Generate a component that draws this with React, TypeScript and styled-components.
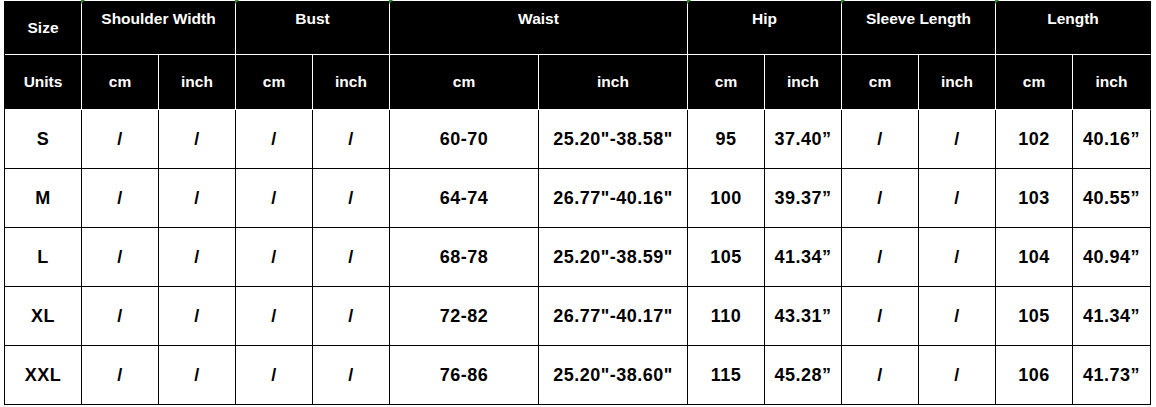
import React from "react";
import styled, { createGlobalStyle, css } from "styled-components";

const Global = createGlobalStyle`
  html, body { margin: 0; padding: 0; background: #fff; }
  body { font-family: "Liberation Sans", Arial, sans-serif; }
`;

const Page = styled.div`
  padding: 1px 0 0 4px;
`;

const Grid = styled.div`
  display: grid;
  grid-template-columns: 77px 77px 77px 77px 77px 149px 149px 77px 77px 77px 77px 77px 78px;
  grid-template-rows: 54px 55px repeat(5, 59px);
  width: max-content;
  border-left: 1px solid #000;
`;

const HeadCell = styled.div<{ $span?: number; $top?: boolean; $mark?: boolean }>`
  position: relative;
  box-sizing: border-box;
  grid-column: span ${(p) => p.$span ?? 1};
  background: #000;
  color: #fff;
  font-weight: bold;
  font-size: 15.5px;
  line-height: 18px;
  border-right: 1px solid #fff;
  border-bottom: 1px solid #fff;
  display: flex;
  justify-content: center;
  align-items: ${(p) => (p.$top ? "flex-start" : "center")};
  padding-top: ${(p) => (p.$top ? "9px" : "0")};
  white-space: nowrap;
  &:nth-child(7) { border-right-color: #000; }
  ${(p) =>
    p.$mark &&
    css`
      &::before {
        content: "";
        position: absolute;
        top: -1px;
        left: -1px;
        width: 0;
        height: 0;
        border-top: 4px solid #2f8a2a;
        border-right: 4px solid transparent;
      }
    `}
`;

const UnitCell = styled(HeadCell)<{ $last?: boolean }>`
  border-right-color: ${(p) => (p.$last ? "#000" : "#fff")};
  &:nth-child(7) { border-right-color: #fff; }
`;

const DataCell = styled.div`
  box-sizing: border-box;
  border-right: 1px solid #000;
  border-bottom: 1px solid #000;
  display: flex;
  align-items: center;
  justify-content: center;
  font-weight: bold;
  font-size: 18px;
  letter-spacing: 0.5px;
  color: #000;
  background: #fff;
  white-space: nowrap;
`;

const groups = ["Shoulder Width", "Bust", "Waist", "Hip", "Sleeve Length", "Length"];

const rows: string[][] = [
  ["S", "/", "/", "/", "/", "60-70", "25.20\"-38.58\"", "95", "37.40\u201d", "/", "/", "102", "40.16\u201d"],
  ["M", "/", "/", "/", "/", "64-74", "26.77\"-40.16\"", "100", "39.37\u201d", "/", "/", "103", "40.55\u201d"],
  ["L", "/", "/", "/", "/", "68-78", "25.20\"-38.59\"", "105", "41.34\u201d", "/", "/", "104", "40.94\u201d"],
  ["XL", "/", "/", "/", "/", "72-82", "26.77\"-40.17\"", "110", "43.31\u201d", "/", "/", "105", "41.34\u201d"],
  ["XXL", "/", "/", "/", "/", "76-86", "25.20\"-38.60\"", "115", "45.28\u201d", "/", "/", "106", "41.73\u201d"],
];

export default function App() {
  return (
    <Page>
      <Global />
      <Grid>
        <HeadCell>Size</HeadCell>
        {groups.map((g) => (
          <HeadCell key={g} $span={2} $top $mark>
            {g}
          </HeadCell>
        ))}
        <UnitCell>Units</UnitCell>
        {groups.flatMap((g, gi) => [
          <UnitCell key={g + "cm"}>cm</UnitCell>,
          <UnitCell key={g + "in"} $last={gi === groups.length - 1}>
            inch
          </UnitCell>,
        ])}
        {rows.flatMap((r, ri) =>
          r.map((v, ci) => <DataCell key={ri + "-" + ci}>{v}</DataCell>)
        )}
      </Grid>
    </Page>
  );
}
